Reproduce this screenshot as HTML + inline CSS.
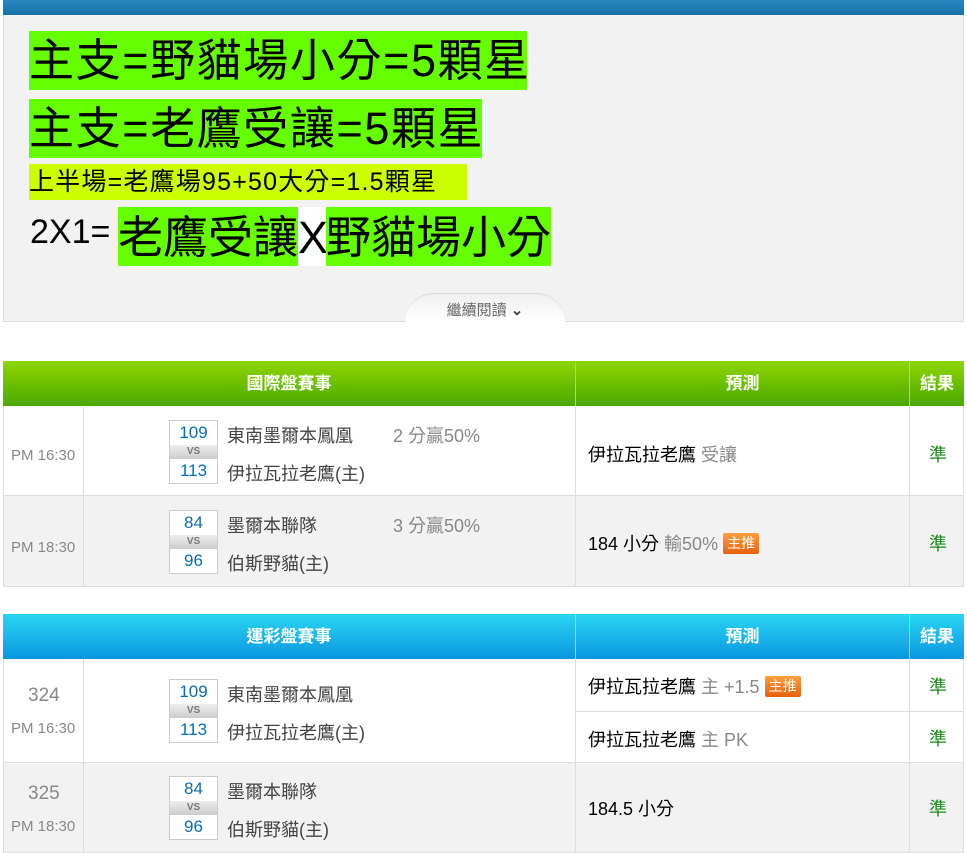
<!DOCTYPE html>
<html><head><meta charset="utf-8"><style>
*{margin:0;padding:0;box-sizing:border-box}
body{width:967px;height:845px;overflow:hidden;background:#fff;font-family:"Liberation Sans","Noto Sans CJK TC",sans-serif;position:relative}
.a{position:absolute}
.top{left:3px;top:0;width:961px;height:15px;background:linear-gradient(#2a86c0,#1570a8)}
.panel{left:3px;top:15px;width:961px;height:307px;background:#f2f2f2;border:1px solid #ddd;border-top:none}
.hl{position:absolute;white-space:nowrap;color:#000;line-height:1}
.g{background:#66ff00}
.tab{left:405px;top:293px;width:160px;height:29px;background:linear-gradient(#f0f0f0,#fff);border-radius:30px 30px 0 0;border-top:1px solid #d8d8d8;text-align:center;font-size:15px;color:#666;line-height:34px}
.hdr{color:#fff;font-weight:bold;font-size:17px;text-align:center;line-height:45px;height:45px}
.cell{position:absolute;border-right:1px solid #ddd;border-bottom:1px solid #ddd}
.t{position:absolute;white-space:nowrap;font-size:18px}
.sb{position:absolute;left:169px;width:49px;border:1px solid #ccc;background:#fff}
.sb div{height:24px;line-height:24px;text-align:center;color:#0a6cb0;font-size:17px}
.sb .vs{height:14px;line-height:14px;background:linear-gradient(#eee,#ccc);color:#777;font-size:10px;font-weight:bold}
.tm{color:#444}
.gr{color:#888}
.ok{color:#1a8a1a;font-size:18px}
.badge{display:inline-block;background:linear-gradient(#ffa040,#e8600a);color:#fff;font-size:14px;padding:1px 4px;border-radius:2px;vertical-align:2px;line-height:19px}
</style></head><body>
<div class="a top"></div>
<div class="a panel"></div>
<div class="hl g" style="left:29px;top:31px;height:59px;width:498px;font-size:45px;line-height:59px;letter-spacing:1.6px">主支=野貓場小分=5顆星</div>
<div class="hl g" style="left:29px;top:99px;height:59px;width:453px;font-size:45px;line-height:59px;letter-spacing:1.6px">主支=老鷹受讓=5顆星</div>
<div class="hl" style="left:29px;top:164px;height:36px;width:438px;font-size:25px;line-height:36px;background:#ccff00;letter-spacing:1.2px">上半場=老鷹場95+50大分=1.5顆星</div>
<div class="hl" style="left:30px;top:212px;font-size:34px;line-height:40px">2X1=</div>
<div class="hl g" style="left:118px;top:207px;height:59px;width:180px;font-size:45px;line-height:62px">老鷹受讓</div>
<div class="hl" style="left:298px;top:207px;height:59px;width:28px;font-size:45px;line-height:62px;background:#fff">X</div>
<div class="hl g" style="left:326px;top:207px;height:59px;width:225px;font-size:45px;line-height:62px">野貓場小分</div>
<div class="a tab">繼續閱讀 <b style="color:#444">⌄</b></div>

<div class="a" style="left:3px;top:361px;width:961px;height:45px;background:linear-gradient(#8fd600,#4aa800)"></div>
<div class="a hdr" style="left:3px;top:361px;width:573px;border-right:1px solid #a6e060">國際盤賽事</div>
<div class="a hdr" style="left:576px;top:361px;width:334px;border-right:1px solid #a6e060">預測</div>
<div class="a hdr" style="left:910px;top:361px;width:54px">結果</div>

<div class="cell" style="left:3px;top:406px;width:81px;height:90px;border-left:1px solid #ddd;background:#fff"></div>
<div class="cell" style="left:84px;top:406px;width:492px;height:90px;background:#fff"></div>
<div class="cell" style="left:576px;top:406px;width:334px;height:90px;background:#fff"></div>
<div class="cell" style="left:910px;top:406px;width:54px;height:90px;background:#fff"></div>
<div class="cell" style="left:3px;top:496px;width:81px;height:91px;border-left:1px solid #ddd;background:#f2f2f2"></div>
<div class="cell" style="left:84px;top:496px;width:492px;height:91px;background:#f2f2f2"></div>
<div class="cell" style="left:576px;top:496px;width:334px;height:91px;background:#f2f2f2"></div>
<div class="cell" style="left:910px;top:496px;width:54px;height:91px;background:#f2f2f2"></div>

<div class="t gr" style="left:11px;top:447px;font-size:15px">PM 16:30</div>
<div class="sb" style="top:420px"><div>109</div><div class="vs">VS</div><div>113</div></div>
<div class="t tm" style="left:227px;top:422px">東南墨爾本鳳凰</div>
<div class="t gr" style="left:393px;top:422px">2 分贏50%</div>
<div class="t tm" style="left:227px;top:460px">伊拉瓦拉老鷹(主)</div>
<div class="t" style="left:588px;top:441px">伊拉瓦拉老鷹 <span class="gr">受讓</span></div>
<div class="t ok" style="left:929px;top:441px">準</div>

<div class="t gr" style="left:11px;top:539px;font-size:15px">PM 18:30</div>
<div class="sb" style="top:510px"><div>84</div><div class="vs">VS</div><div>96</div></div>
<div class="t tm" style="left:227px;top:512px">墨爾本聯隊</div>
<div class="t gr" style="left:393px;top:512px">3 分贏50%</div>
<div class="t tm" style="left:227px;top:550px">伯斯野貓(主)</div>
<div class="t" style="left:588px;top:530px">184 小分 <span class="gr">輸50%</span> <span class="badge">主推</span></div>
<div class="t ok" style="left:929px;top:530px">準</div>

<div class="a" style="left:3px;top:614px;width:961px;height:45px;background:linear-gradient(#2ad6f2,#0a96e0)"></div>
<div class="a hdr" style="left:3px;top:614px;width:573px;border-right:1px solid #7fd8f5">運彩盤賽事</div>
<div class="a hdr" style="left:576px;top:614px;width:334px;border-right:1px solid #7fd8f5">預測</div>
<div class="a hdr" style="left:910px;top:614px;width:54px">結果</div>

<div class="cell" style="left:3px;top:659px;width:81px;height:104px;border-left:1px solid #ddd;background:#fff"></div>
<div class="cell" style="left:84px;top:659px;width:492px;height:104px;background:#fff"></div>
<div class="cell" style="left:576px;top:659px;width:334px;height:53px;background:#fff"></div>
<div class="cell" style="left:910px;top:659px;width:54px;height:53px;background:#fff"></div>
<div class="cell" style="left:576px;top:712px;width:334px;height:51px;background:#fff"></div>
<div class="cell" style="left:910px;top:712px;width:54px;height:51px;background:#fff"></div>
<div class="cell" style="left:3px;top:763px;width:81px;height:90px;border-left:1px solid #ddd;background:#f2f2f2"></div>
<div class="cell" style="left:84px;top:763px;width:492px;height:90px;background:#f2f2f2"></div>
<div class="cell" style="left:576px;top:763px;width:334px;height:90px;background:#f2f2f2"></div>
<div class="cell" style="left:910px;top:763px;width:54px;height:90px;background:#f2f2f2"></div>

<div class="t gr" style="left:28px;top:685px;font-size:19px">324</div>
<div class="t gr" style="left:11px;top:720px;font-size:15px">PM 16:30</div>
<div class="sb" style="top:679px"><div>109</div><div class="vs">VS</div><div>113</div></div>
<div class="t tm" style="left:227px;top:681px">東南墨爾本鳳凰</div>
<div class="t tm" style="left:227px;top:719px">伊拉瓦拉老鷹(主)</div>
<div class="t" style="left:588px;top:673px">伊拉瓦拉老鷹 <span class="gr">主 +1.5</span> <span class="badge">主推</span></div>
<div class="t ok" style="left:929px;top:673px">準</div>
<div class="t" style="left:588px;top:726px">伊拉瓦拉老鷹 <span class="gr">主 PK</span></div>
<div class="t ok" style="left:929px;top:725px">準</div>

<div class="t gr" style="left:28px;top:783px;font-size:19px">325</div>
<div class="t gr" style="left:11px;top:818px;font-size:15px">PM 18:30</div>
<div class="sb" style="top:776px"><div>84</div><div class="vs">VS</div><div>96</div></div>
<div class="t tm" style="left:227px;top:778px">墨爾本聯隊</div>
<div class="t tm" style="left:227px;top:816px">伯斯野貓(主)</div>
<div class="t" style="left:588px;top:795px">184.5 小分</div>
<div class="t ok" style="left:929px;top:795px">準</div>
</body></html>
